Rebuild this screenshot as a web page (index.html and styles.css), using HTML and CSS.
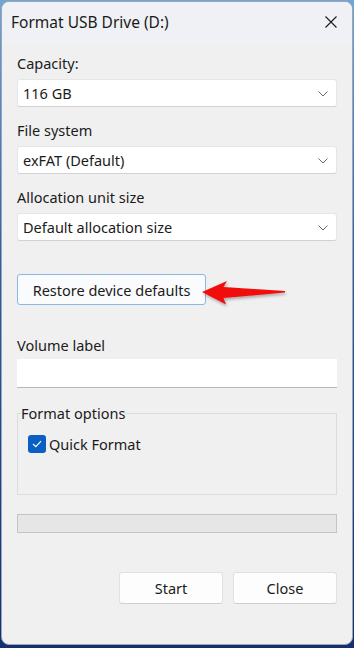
FILE: index.html
```html
<!DOCTYPE html>
<html lang="en">
<head>
    <meta charset="UTF-8">
    <title>Format USB Drive (D:)</title>
    <link rel="stylesheet" href="styles.css">
</head>
<body>
    <div class="window">
        <div class="titlebar">
            <span class="title">Format USB Drive (D:)</span>
            <svg class="close" width="12" height="12" viewBox="0 0 12 12">
                <path d="M0.5 0.5 L11.5 11.5 M11.5 0.5 L0.5 11.5" stroke="#1a1a1a" stroke-width="1.1" fill="none"/>
            </svg>
        </div>

        <div class="content">
            <label class="label first">Capacity:</label>
            <div class="select">
                <span>116 GB</span>
                <svg class="chevron" width="10" height="6" viewBox="0 0 10 6"><path d="M0.5 0.5 L5 5 L9.5 0.5" stroke="#6a6a6a" fill="none"/></svg>
            </div>

            <label class="label">File system</label>
            <div class="select">
                <span>exFAT (Default)</span>
                <svg class="chevron" width="10" height="6" viewBox="0 0 10 6"><path d="M0.5 0.5 L5 5 L9.5 0.5" stroke="#6a6a6a" fill="none"/></svg>
            </div>

            <label class="label">Allocation unit size</label>
            <div class="select">
                <span>Default allocation size</span>
                <svg class="chevron" width="10" height="6" viewBox="0 0 10 6"><path d="M0.5 0.5 L5 5 L9.5 0.5" stroke="#6a6a6a" fill="none"/></svg>
            </div>

            <div class="restore-row">
                <button class="btn restore">Restore device defaults</button>
                <!-- red pointer arrow drawn over the dialog -->
                <svg class="pointer" width="96" height="40" viewBox="0 0 96 40">
                    <defs>
                        <filter id="shadow" x="-20%" y="-40%" width="140%" height="180%">
                            <feDropShadow dx="1" dy="2" stdDeviation="1.5" flood-color="#000" flood-opacity="0.3"/>
                        </filter>
                    </defs>
                    <path d="M0 19 L25 8 L21.5 14 L83 18 L83 19.5 L21.5 25 L24 31.5 Z" fill="#f20d0d" filter="url(#shadow)"/>
                </svg>
            </div>

            <label class="label volume">Volume label</label>
            <div class="input"></div>

            <fieldset class="group">
                <legend>Format options</legend>
                <div class="check-row">
                    <span class="checkbox">
                        <svg width="10" height="8" viewBox="0 0 10 8"><path d="M1 4 L3.8 6.6 L9 1.2" stroke="#fff" stroke-width="1.2" fill="none"/></svg>
                    </span>
                    <span>Quick Format</span>
                </div>
            </fieldset>

            <div class="progress"></div>

            <div class="actions">
                <button class="btn action">Start</button>
                <button class="btn action">Close</button>
            </div>
        </div>
    </div>
</body>
</html>
```

FILE: styles.css
```css
body {
    margin: 0;
    height: 648px;
    overflow: hidden;
    font-family: 'Noto Sans', 'Open Sans', sans-serif;
    font-size: 14.5px;
    color: #1b1b1b;
    background: linear-gradient(180deg, #6fa6d6 0%, #2d5fa8 40%, #14306e 100%);
}
.window {
    margin: 1px 1px 0 1px;
    height: 644px;
    box-sizing: border-box;
    background-color: #f0f0f0;
    border: 1px solid #9aa6b8;
    border-radius: 8px;
    overflow: hidden;
    display: flex;
    flex-direction: column;
}
.titlebar {
    height: 42px;
    flex-shrink: 0;
    display: flex;
    align-items: center;
    justify-content: space-between;
    padding: 0 15px 0 9px;
    background-color: #eff1f5;
}
.title {
    font-size: 15.5px;
    margin-top: -3px;
}
.close {
    margin-top: -3px;
}
.content {
    padding: 0 15px;
    display: flex;
    flex-direction: column;
}
.label {
    display: block;
    height: 20px;
    line-height: 20px;
    margin: 13px 0 6px 0;
}
.label.first {
    margin-top: 9px;
}
.label.volume {
    margin-top: 30px;
    margin-bottom: 4px;
}
.select {
    height: 28px;
    box-sizing: border-box;
    background-color: #fff;
    border: 1px solid #e6e6e6;
    border-bottom-color: #d2d2d2;
    border-radius: 3px;
    display: flex;
    align-items: center;
    justify-content: space-between;
    padding: 0 8px 0 5px;
}
.chevron {
    margin-top: 1px;
}
.restore-row {
    position: relative;
    margin-top: 33px;
    height: 31px;
}
.btn {
    font-family: inherit;
    font-size: 14.5px;
    color: #1b1b1b;
    background-color: #fdfdfd;
    border: 1px solid #e0e0e0;
    border-bottom-color: #cfcfcf;
    border-radius: 3px;
    padding: 0;
}
.restore {
    width: 189px;
    height: 31px;
    border: 1px solid #8ab8e2;
    background-color: #fafbfd;
}
.pointer {
    position: absolute;
    left: 185px;
    top: -1px;
}
.input {
    height: 29px;
    box-sizing: border-box;
    background-color: #fff;
    border-bottom: 1px solid #b8b8b8;
}
.group {
    margin: 17px 0 0 0;
    height: 90px;
    box-sizing: border-box;
    border: 1px solid #dcdcdc;
    padding: 0 10px;
}
.group legend {
    padding: 0;
    margin-left: -7px;
    line-height: 16px;
}
.check-row {
    display: flex;
    align-items: center;
    gap: 3px;
    margin-top: 13px;
}
.checkbox {
    width: 18px;
    height: 18px;
    border-radius: 3px;
    background-color: #0a5fc2;
    display: flex;
    align-items: center;
    justify-content: center;
}
.progress {
    margin-top: 19px;
    height: 19px;
    box-sizing: border-box;
    background-color: #e6e6e6;
    border: 1px solid #c4c4c4;
}
.actions {
    margin-top: 39px;
    display: flex;
    justify-content: flex-end;
    gap: 10px;
}
.action {
    width: 104px;
    height: 32px;
}
```
